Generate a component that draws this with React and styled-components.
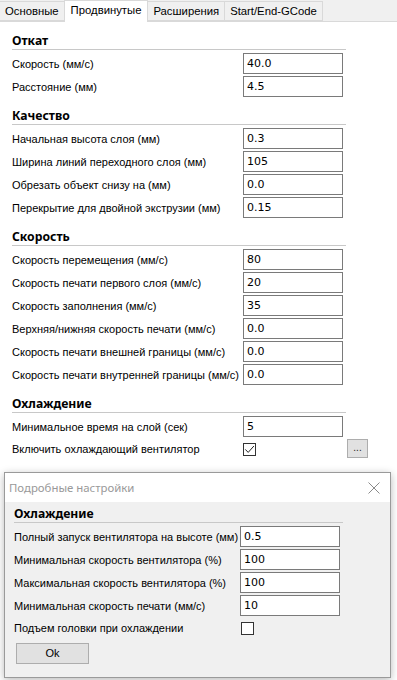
import React from "react";
import styled, { createGlobalStyle } from "styled-components";

const GlobalStyle = createGlobalStyle`
  html, body {
    margin: 0;
    padding: 0;
    background: #ffffff;
  }
  body {
    font-family: "Liberation Sans", Arial, sans-serif;
    font-size: 11px;
    color: #000;
  }
`;

const sections = [
  {
    title: "Откат",
    rows: [
      ["Скорость (мм/с)", "40.0"],
      ["Расстояние (мм)", "4.5"],
    ],
  },
  {
    title: "Качество",
    rows: [
      ["Начальная высота слоя (мм)", "0.3"],
      ["Ширина линий переходного слоя (мм)", "105"],
      ["Обрезать объект снизу на (мм)", "0.0"],
      ["Перекрытие для двойной экструзии (мм)", "0.15"],
    ],
  },
  {
    title: "Скорость",
    rows: [
      ["Скорость перемещения (мм/с)", "80"],
      ["Скорость печати первого слоя (мм/с)", "20"],
      ["Скорость заполнения (мм/с)", "35"],
      ["Верхняя/нижняя скорость печати (мм/с)", "0.0"],
      ["Скорость печати внешней границы (мм/с)", "0.0"],
      ["Скорость печати внутренней границы (мм/с)", "0.0"],
    ],
  },
];

const dialogRows = [
  ["Полный запуск вентилятора на высоте (мм)", "0.5"],
  ["Минимальная скорость вентилятора (%)", "100"],
  ["Максимальная скорость вентилятора (%)", "100"],
  ["Минимальная скорость печати (мм/с)", "10"],
];

const tabs = ["Основные", "Продвинутые", "Расширения", "Start/End-GCode"];

function App() {
  return (
    <Window>
      <GlobalStyle />
      <TabBar>
        {tabs.map((t, i) => (
          <Tab key={t} active={i === 1}>{t}</Tab>
        ))}
      </TabBar>
      <Panel>
        {sections.map((s) => (
          <Section key={s.title}>
            <Header>{s.title}</Header>
            <Rows>
              {s.rows.map(([label, value]) => (
                <Row key={label}>
                  <Label>{label}</Label>
                  <Field value={value} readOnly />
                </Row>
              ))}
            </Rows>
          </Section>
        ))}
        <Section>
          <Header>Охлаждение</Header>
          <Rows>
            <Row>
              <Label>Минимальное время на слой (сек)</Label>
              <Field value="5" readOnly />
            </Row>
            <CheckRow>
              <CheckLabel>Включить охлаждающий вентилятор</CheckLabel>
              <Check>
                <svg width="11" height="11" viewBox="0 0 11 11">
                  <path d="M1.3 5.4 L4.2 8.4 L9.9 2.0" fill="none" stroke="#222" strokeWidth="1" />
                </svg>
              </Check>
              <MoreButton>...</MoreButton>
            </CheckRow>
          </Rows>
        </Section>
      </Panel>

      <Dialog>
        <TitleBar>
          <Title>Подробные настройки</Title>
          <svg width="12" height="12" viewBox="0 0 12 12">
            <path d="M0.5 0.5 L11.5 11.5 M11.5 0.5 L0.5 11.5" stroke="#8a8a8a" strokeWidth="1" />
          </svg>
        </TitleBar>
        <DialogBody>
          <Header dialog>Охлаждение</Header>
          <Rows>
            {dialogRows.map(([label, value]) => (
              <Row key={label} dialog>
                <Label>{label}</Label>
                <Field value={value} readOnly />
              </Row>
            ))}
            <CheckRow dialog>
              <CheckLabel dialog>Подъем головки при охлаждении</CheckLabel>
              <Check />
            </CheckRow>
          </Rows>
          <OkButton>Ok</OkButton>
        </DialogBody>
      </Dialog>
    </Window>
  );
}

export default App;

const Window = styled.div`
  width: 397px;
  height: 680px;
  background: #ffffff;
  overflow: hidden;
`;

const TabBar = styled.div`
  display: flex;
  align-items: flex-end;
  height: 22px;
  background: #f0f0f0;
  border-bottom: 1px solid #d9d9d9;
  box-sizing: border-box;
`;

const Tab = styled.div`
  box-sizing: border-box;
  height: ${(p) => (p.active ? "22px" : "20px")};
  margin-bottom: ${(p) => (p.active ? "-1px" : "0")};
  padding: ${(p) => (p.active ? "3px 6px 0" : "3px 5px 0")};
  background: ${(p) => (p.active ? "#ffffff" : "#f0f0f0")};
  border: 1px solid #d9d9d9;
  border-bottom: ${(p) => (p.active ? "none" : "1px solid #d9d9d9")};
  margin-left: -1px;
  font-size: 11.3px;
  white-space: nowrap;
  &:first-child {
    margin-left: 0;
    border-left: none;
  }
`;

const Panel = styled.div`
  padding: 11px 0 0 12px;
`;

const Section = styled.div`
  width: 334px;
  & + & {
    margin-top: 11px;
  }
`;

const Header = styled.div`
  font-family: "Noto Sans", "Liberation Sans", sans-serif;
  font-weight: 700;
  font-size: 12.2px;
  line-height: 16px;
  border-bottom: 1px solid #c8c8c8;
  margin-bottom: 3px;
  width: ${(p) => (p.dialog ? "329px" : "334px")};
`;

const Rows = styled.div`
  display: flex;
  flex-direction: column;
  gap: 2px;
`;

const Row = styled.div`
  display: grid;
  grid-template-columns: ${(p) => (p.dialog ? "226px 100px" : "231px 100px")};
  align-items: center;
  height: 21px;
`;

const CheckRow = styled.div`
  display: flex;
  align-items: center;
  height: 20px;
  & > * {
    flex-shrink: 0;
  }
`;

const Label = styled.div`
  white-space: nowrap;
`;

const CheckLabel = styled(Label)`
  width: ${(p) => (p.dialog ? "227px" : "231px")};
`;

const Field = styled.input`
  box-sizing: border-box;
  width: 100px;
  height: 21px;
  border: 1px solid #7a7a7a;
  background: #fff;
  padding: 0 3px;
  margin: 0;
  font-family: "DejaVu Sans", Verdana, sans-serif;
  font-size: 11px;
  color: #000;
  outline: none;
`;

const Check = styled.div`
  box-sizing: border-box;
  width: 13px;
  height: 13px;
  border: 1px solid #333;
  background: #fff;
  display: flex;
  align-items: center;
  justify-content: center;
`;

const MoreButton = styled.div`
  box-sizing: border-box;
  margin-left: 91px;
  margin-top: -2px;
  width: 21px;
  height: 19px;
  background: #e1e1e1;
  border: 1px solid #adadad;
  font-size: 10px;
  text-align: center;
  line-height: 15px;
  color: #222;
`;

const Dialog = styled.div`
  box-sizing: border-box;
  margin: 13px 0 0 4px;
  width: 387px;
  height: 206px;
  border: 1px solid #9a9a9a;
  box-shadow: 0 2px 8px rgba(0, 0, 0, 0.28);
  background: #f0f0f0;
  display: flex;
  flex-direction: column;
`;

const TitleBar = styled.div`
  height: 29px;
  background: #fff;
  display: flex;
  align-items: center;
  justify-content: space-between;
  padding: 0 10px 0 4px;
  flex-shrink: 0;
`;

const Title = styled.div`
  font-family: "Noto Sans", "Liberation Sans", sans-serif;
  font-size: 11.4px;
  color: #999999;
`;

const DialogBody = styled.div`
  padding: 4px 0 0 9px;
`;

const OkButton = styled.div`
  box-sizing: border-box;
  margin: 5px 0 0 2px;
  width: 73px;
  height: 21px;
  background: #e1e1e1;
  border: 1px solid #adadad;
  text-align: center;
  line-height: 19px;
`;
